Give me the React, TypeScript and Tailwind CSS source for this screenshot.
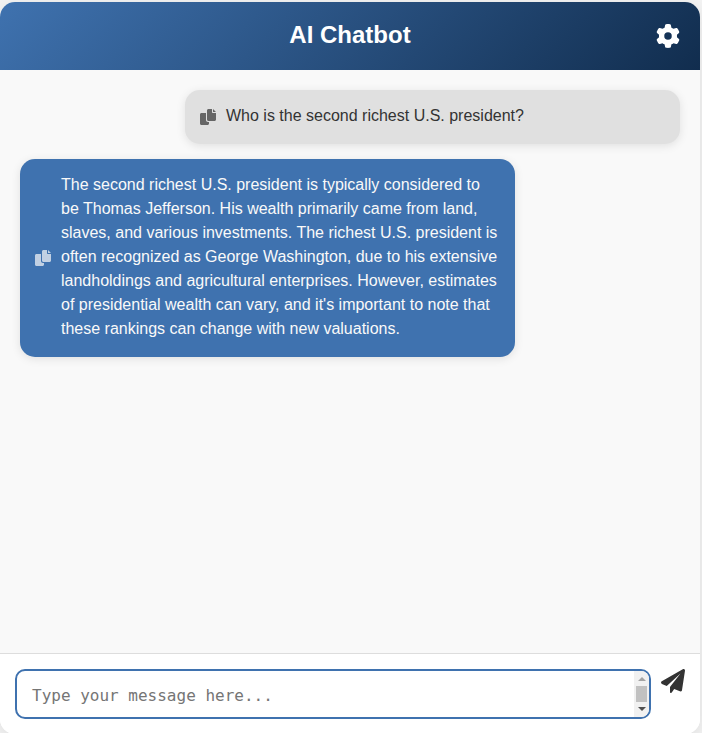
import { useState } from "react";
import { FaGear } from "react-icons/fa6";

function CopyIcon() {
  return (
    <svg viewBox="0 0 512 512" className="size-4" fill="currentColor" aria-hidden="true">
      <path d="M384 96L384 0h-112c-26.51 0-48 21.49-48 48v288c0 26.51 21.49 48 48 48H464c26.51 0 48-21.49 48-48V128h-95.1C398.4 128 384 113.6 384 96zM416 0v96h96L416 0zM192 352V128h-144c-26.51 0-48 21.49-48 48v288c0 26.51 21.49 48 48 48h192c26.51 0 48-21.49 48-48L288 416h-32C220.7 416 192 387.3 192 352z" />
    </svg>
  );
}

function PlaneIcon() {
  return (
    <svg viewBox="0 0 512 512" className="size-6" fill="currentColor" aria-hidden="true">
      <path d="M511.6 36.86l-64 415.1c-1.5 9.734-7.375 18.22-15.97 23.05c-4.844 2.719-10.27 4.097-15.68 4.097c-4.188 0-8.319-.8154-12.29-2.472l-122.6-51.1l-50.86 76.29C226.3 508.5 219.8 512 212.8 512C201.3 512 192 502.7 192 491.2v-96.18c0-7.115 2.372-14.03 6.742-19.64L416 96l-293.7 264.3L19.69 317.5C8.438 312.8 .8125 302.2 .0625 289.1s5.469-23.72 16.06-29.77l448-255.1c10.69-6.109 23.88-5.547 34 1.406S513.5 24.72 511.6 36.86z" />
    </svg>
  );
}

type Message = { from: "user" | "bot"; text: string };

const messages: Message[] = [
  { from: "user", text: "Who is the second richest U.S. president?" },
  {
    from: "bot",
    text: "The second richest U.S. president is typically considered to be Thomas Jefferson. His wealth primarily came from land, slaves, and various investments. The richest U.S. president is often recognized as George Washington, due to his extensive landholdings and agricultural enterprises. However, estimates of presidential wealth can vary, and it's important to note that these rankings can change with new valuations.",
  },
];

function Bubble({ from, text }: Message) {
  const tone =
    from === "user"
      ? "self-end bg-[#e0e0e0] text-[#333333]"
      : "self-start bg-[#3f72af] text-[#f9f9f9]";
  return (
    <div
      className={`flex w-3/4 items-center gap-2.5 rounded-[15px] px-[15px] py-3.5 shadow-[0_2px_10px_rgba(0,0,0,0.1)] ${tone}`}
    >
      <button type="button" aria-label="Copy message" className="shrink-0 opacity-70">
        <CopyIcon />
      </button>
      <p className="pb-0.5 text-base leading-6">{text}</p>
    </div>
  );
}

export default function App() {
  const [draft, setDraft] = useState("");
  return (
    <div className="h-screen overflow-hidden bg-[#f4f4f4] pt-0.5 pr-0.5 font-['Liberation_Sans',Arial,sans-serif]">
      <main className="flex h-[calc(100vh-1px)] flex-col overflow-hidden rounded-[15px] bg-white shadow-[0_4px_20px_rgba(0,0,0,0.1)]">
        <header className="grid grid-cols-[1fr_auto_1fr] items-center bg-linear-[135deg,#3f72af,#112d4e] px-5 py-4 text-white">
          <h1 className="col-start-2 pb-0.5 text-2xl leading-[34px] font-bold">AI Chatbot</h1>
          <button type="button" aria-label="Settings" className="justify-self-end">
            <FaGear className="size-6" />
          </button>
        </header>

        <section className="flex flex-1 flex-col gap-[15px] overflow-hidden bg-[#f9f9f9] p-5">
          {messages.map((message) => (
            <Bubble key={message.text} {...message} />
          ))}
        </section>

        <form
          className="flex items-start gap-2.5 border-t border-[#dddddd] bg-white p-[15px]"
          onSubmit={(event) => event.preventDefault()}
        >
          <div className="flex h-[50px] flex-1 overflow-hidden rounded-[10px] border-2 border-[#3f72af]">
            <textarea
              aria-label="Message"
              placeholder="Type your message here..."
              value={draft}
              onChange={(event) => setDraft(event.target.value)}
              className="min-w-0 flex-1 resize-none overflow-hidden px-[15px] pt-[13px] font-['DejaVu_Sans_Mono',monospace] text-base leading-6 text-[#333333] outline-none placeholder:text-[#757575]"
            />
            <div
              className="flex w-[15px] flex-col items-center justify-between bg-[#f1f1f1] py-1.5"
              aria-hidden="true"
            >
              <div className="size-0 border-x-4 border-b-4 border-x-transparent border-b-[#a3a3a3]" />
              <div className="h-4 w-[11px] bg-[#c1c1c1]" />
              <div className="size-0 border-x-4 border-t-4 border-x-transparent border-t-[#505050]" />
            </div>
          </div>
          <button type="submit" aria-label="Send" className="text-[#333333]">
            <PlaneIcon />
          </button>
        </form>
      </main>
    </div>
  );
}
